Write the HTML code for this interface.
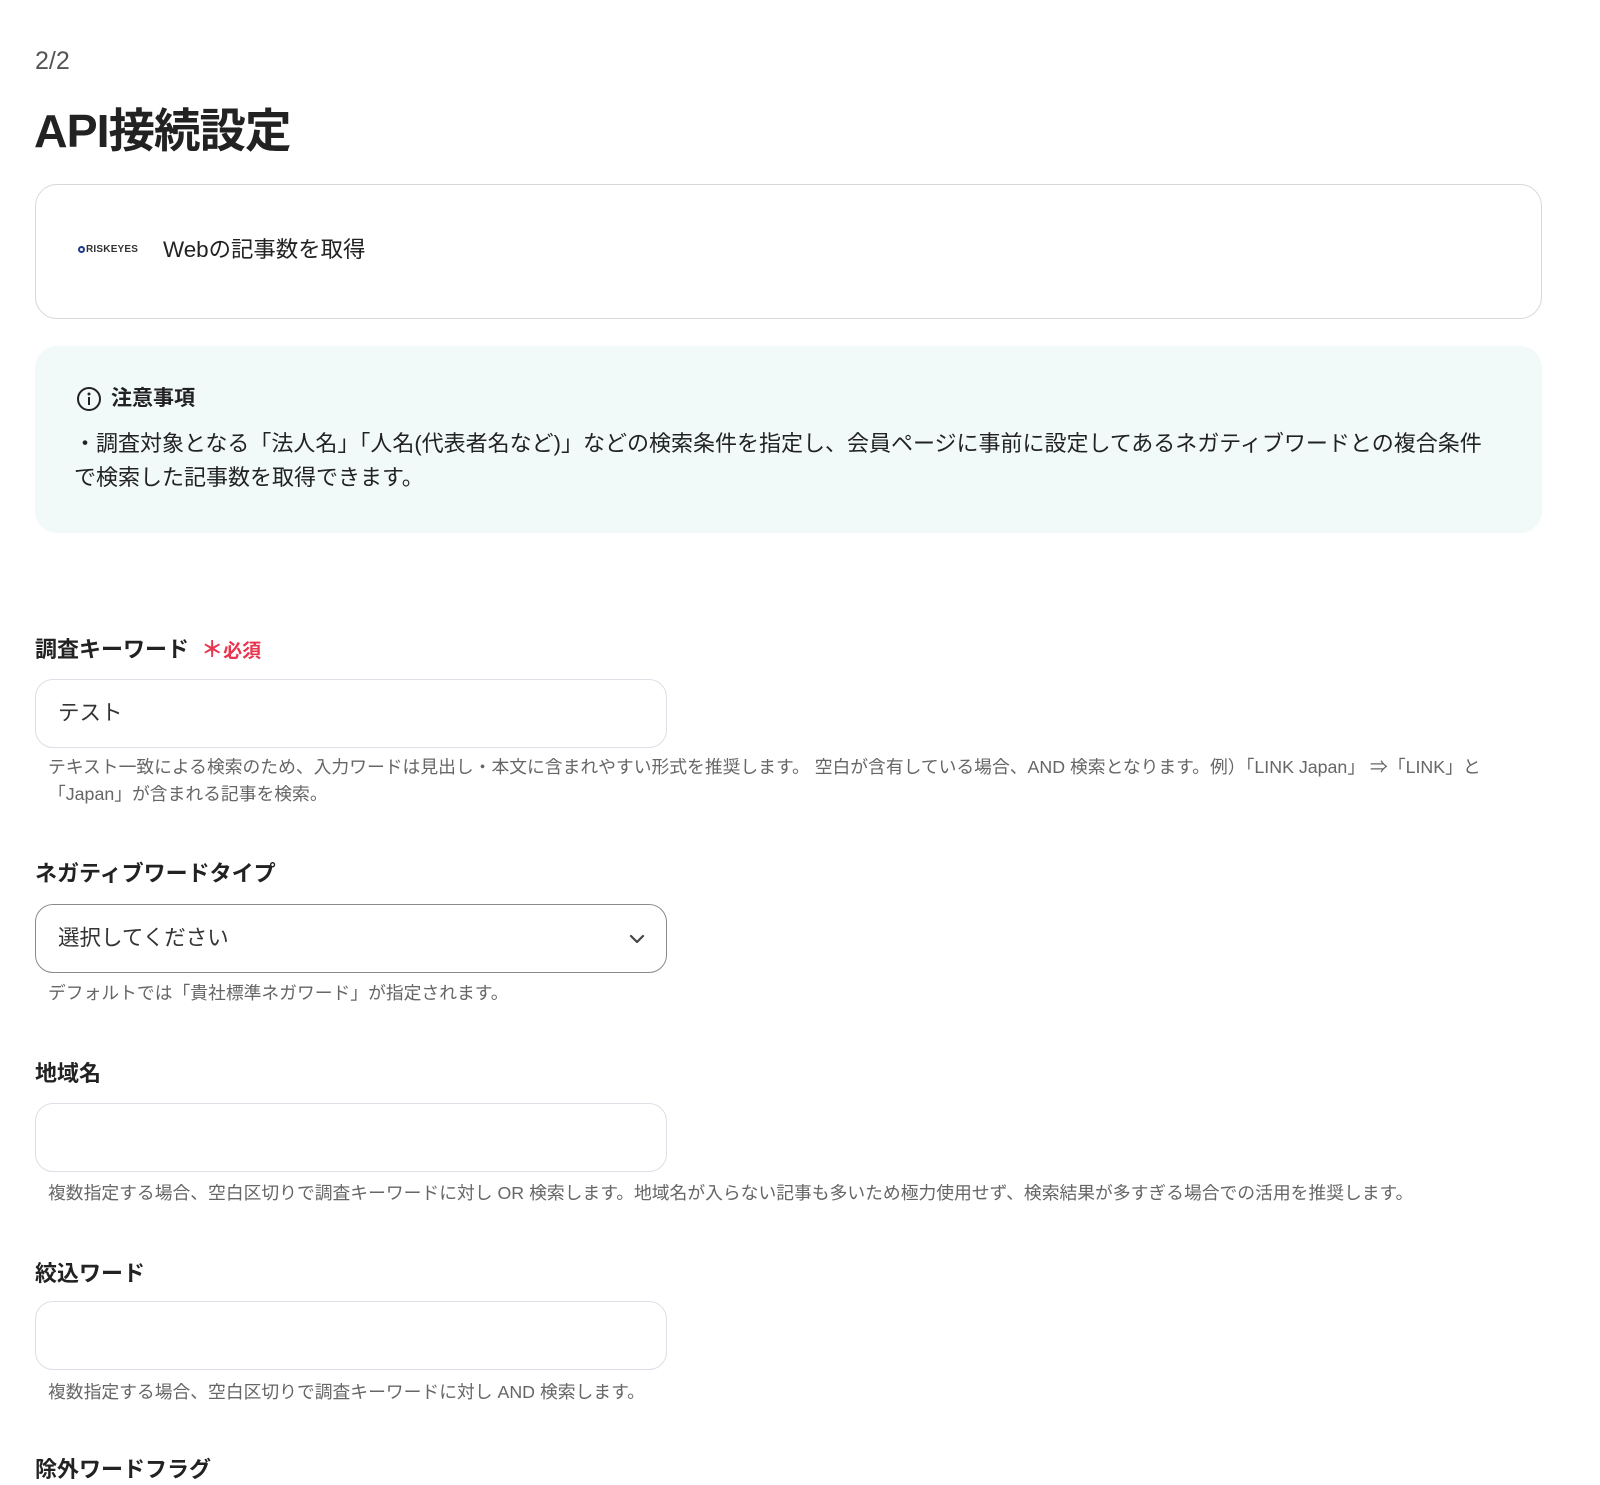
<!DOCTYPE html>
<html><head><meta charset="utf-8"><style>
*{margin:0;padding:0;box-sizing:border-box}
body{width:1600px;height:1468px;overflow:hidden;background:#fff;font-family:"Liberation Sans","Noto Sans CJK JP",sans-serif;color:#222;position:relative}
.a{position:absolute;white-space:nowrap}
.lbl{font-size:22px;font-weight:bold;color:#222;line-height:30px}
.inp{position:absolute;left:35px;width:632px;height:69px;border:1px solid #dcdfe6;border-radius:18px;background:#fff}
.help{font-size:17.8px;color:#666;line-height:27px;left:48px}
</style></head><body>
<div class="a" style="left:35px;top:46px;font-size:25px;color:#555;line-height:30px">2/2</div>
<div class="a" style="left:34px;top:103px;font-size:46.5px;font-weight:bold;color:#222;line-height:56px;letter-spacing:-1px">API接続設定</div>

<div style="position:absolute;left:35px;top:184px;width:1507px;height:135px;border:1px solid #d8d8d8;border-radius:22px"></div>
<div class="a" style="left:78px;top:244px;font-size:10px;font-weight:bold;color:#333;line-height:12px;letter-spacing:0.2px"><span style="display:inline-block;width:7px;height:7px;border:2px solid #1e3a8a;border-radius:50%;vertical-align:-1px;margin-right:1px"></span>RISKEYES</div>
<div class="a" style="left:163px;top:235px;font-size:22.4px;line-height:30px;color:#222">Webの記事数を取得</div>

<div style="position:absolute;left:35px;top:346px;width:1507px;height:187px;background:#f1f9f9;border-radius:22px"></div>
<svg class="a" style="left:76px;top:386px" width="26" height="26" viewBox="0 0 26 26"><circle cx="13" cy="13" r="11" fill="none" stroke="#222" stroke-width="2"/><circle cx="13" cy="8" r="1.5" fill="#222"/><rect x="12" y="11" width="2" height="8" fill="#222"/></svg>
<div class="a" style="left:111px;top:384px;font-size:21px;font-weight:bold;line-height:30px">注意事項</div>
<div class="a" style="left:74px;top:427px;font-size:22px;line-height:34px;color:#222">・調査対象となる「法人名」「人名(代表者名など)」などの検索条件を指定し、会員ページに事前に設定してあるネガティブワードとの複合条件<br>で検索した記事数を取得できます。</div>

<div class="a lbl" style="left:35px;top:635px">調査キーワード <span style="color:#e8344e;margin-left:6px">＊</span><span style="color:#e8344e;font-size:19px">必須</span></div>
<div class="inp" style="top:679px"></div>
<div class="a" style="left:58px;top:698px;font-size:21.5px;line-height:30px;color:#333">テスト</div>
<div class="a help" style="top:754px">テキスト一致による検索のため、入力ワードは見出し・本文に含まれやすい形式を推奨します。 空白が含有している場合、AND 検索となります。例）「LINK Japan」 ⇒「LINK」と<br>「Japan」が含まれる記事を検索。</div>

<div class="a lbl" style="left:35px;top:859px">ネガティブワードタイプ</div>
<div class="inp" style="top:904px;border-color:#8a8a8a"></div>
<div class="a" style="left:58px;top:923px;font-size:21.5px;line-height:30px;color:#333">選択してください</div>
<svg class="a" style="left:629px;top:931px" width="16" height="16" viewBox="0 0 16 16"><path d="M2 5 L8 11 L14 5" fill="none" stroke="#444" stroke-width="2.2" stroke-linecap="round" stroke-linejoin="round"/></svg>
<div class="a help" style="top:980px">デフォルトでは「貴社標準ネガワード」が指定されます。</div>

<div class="a lbl" style="left:35px;top:1059px">地域名</div>
<div class="inp" style="top:1103px"></div>
<div class="a help" style="top:1180px">複数指定する場合、空白区切りで調査キーワードに対し OR 検索します。地域名が入らない記事も多いため極力使用せず、検索結果が多すぎる場合での活用を推奨します。</div>

<div class="a lbl" style="left:35px;top:1259px">絞込ワード</div>
<div class="inp" style="top:1301px"></div>
<div class="a help" style="top:1379px">複数指定する場合、空白区切りで調査キーワードに対し AND 検索します。</div>

<div class="a lbl" style="left:35px;top:1455px">除外ワードフラグ</div>
</body></html>
